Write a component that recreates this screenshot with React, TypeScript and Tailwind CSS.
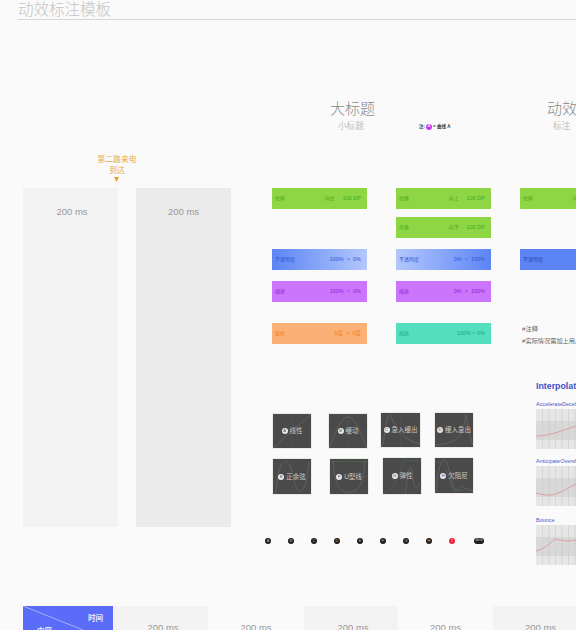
const rowTone = {
  green: "bg-[#8fd645] text-[#45a81a]",
  blueOut: "bg-gradient-to-r from-[#5c84f4] to-[#b4c7fb] text-[#2c58d6]",
  blueIn: "bg-gradient-to-r from-[#b4c7fb] to-[#5c84f4] text-[#2c58d6]",
  blue: "bg-[#5c84f4] text-[#2349b8]",
  purple: "bg-[#ca75fb] text-[#9420d8]",
  orange: "bg-[#fbb176] text-[#ef7b16]",
  teal: "bg-[#53dfbe] text-[#20a385]",
};

function MotionRow({ label, dir, value, tone, className }: { label: string; dir?: string; value?: string; tone: keyof typeof rowTone; className?: string }) {
  return (
    <div className={`flex h-[21px] w-[95px] shrink-0 items-center pl-[3px] pr-[6px] text-[5px] ${rowTone[tone]} ${className ?? ""}`}>
      <span className="whitespace-nowrap">{label}</span>
      <span className="flex-1" />
      {dir && <span className="mr-[8px] whitespace-nowrap">{dir}</span>}
      {value && <span className="whitespace-pre text-[5.5px]">{value}</span>}
    </div>
  );
}

function CurveCard({ letter, label, d, d2, className }: { letter: string; label: string; d: string; d2?: string; className?: string }) {
  return (
    <div className={`relative flex h-[34px] w-[38px] shrink-0 items-center justify-center gap-[2px] bg-[#4a4a4a] shadow-[0_0_1px_#999] ${className ?? ""}`}>
      <svg viewBox="0 0 38 34" className="absolute inset-0 h-full w-full" fill="none">
        <path d="M19 0V34M0 17H38" stroke="#555" strokeWidth="0.5" />
        <path d={d} stroke="#6e6e68" strokeWidth="0.6" />
        {d2 && <path d={d2} stroke="#4a6e4a" strokeWidth="0.6" />}
      </svg>
      <span className="relative flex h-[6px] w-[6px] items-center justify-center rounded-full bg-[#e8e8e8] text-[4px] text-[#444]">{letter}</span>
      <span className="relative whitespace-nowrap text-[6.5px] text-[#c8c8c8]">{label}</span>
    </div>
  );
}

function Dot({ letter, red }: { letter: string; red?: boolean }) {
  return (
    <span className={`flex h-[6px] w-[6px] shrink-0 items-center justify-center rounded-full text-[4px] ${red ? "bg-[#f0203c] text-white" : "bg-[#1c1c1c] text-[#bbb]"}`}>
      {letter}
    </span>
  );
}

function Chart({ name, d, className }: { name: string; d: string; className?: string }) {
  return (
    <div className={className}>
      <div className="whitespace-nowrap text-[5.5px] leading-[7px] text-[#4a5ac6]">{name}</div>
      <svg width="80" height="40" viewBox="0 0 80 40" className="mt-[1px]">
        <rect width="80" height="40" fill="#e6e6e6" />
        <rect y="12" width="80" height="19" fill="#d8d8d8" />
        {[6.5, 13, 19.5, 26, 32.5, 39, 45.5, 52, 58.5, 65, 71.5].map((x) => (
          <path key={x} d={`M${x} 0V40`} stroke="#cbcbcb" strokeWidth="0.6" />
        ))}
        <path d={d} fill="none" stroke="#d98a8c" strokeWidth="0.7" />
      </svg>
    </div>
  );
}

const timeline = [
  { fill: true, w: "w-[95px] pl-[5px]" },
  { fill: false, w: "w-[96px]" },
  { fill: true, w: "w-[94px] pl-[4px]" },
  { fill: false, w: "w-[95px]" },
  { fill: true, w: "w-[95px]" },
];

export default function App() {
  return (
    <div className="h-[630px] w-[576px] overflow-hidden bg-[#fafafa] font-['Liberation_Sans','Noto_Sans_CJK_SC',sans-serif]">
      <div className="ml-[18px] h-[20px] border-b border-[#d6d6d6] text-[15.5px] font-light leading-[19px] text-[#c4c4c4]">动效标注模板</div>

      <div className="flex h-[586px] items-start pl-[23px]">
        {/* 时间轴两列 */}
        <div className="mr-[41px] w-[208px] shrink-0 pt-[134px]">
          <div className="w-[188px] text-center text-[7.8px] leading-[11px] text-[#e8ac45]">
            第二路来电
            <br />
            到达
          </div>
          <div className="w-[186px]">
            <svg width="5" height="5" viewBox="0 0 5 5" className="mx-auto mt-[1px]">
              <path d="M0 0H5L2.5 5Z" fill="#e8a02e" />
            </svg>
          </div>
          <div className="mt-[6px] flex gap-[18px]">
            <div className="h-[339px] w-[95px] bg-[#f3f3f3] pl-[3px] pt-[17px] text-center text-[9.5px] leading-[13px] text-[#999]">200 ms</div>
            <div className="h-[339px] w-[95px] bg-[#ebebeb] pt-[17px] text-center text-[9.5px] leading-[13px] text-[#999]">200 ms</div>
          </div>
        </div>

        {/* 动效标注两列 + 曲线 */}
        <div className="w-[219px] shrink-0 pt-[80px]">
          <div className="flex gap-[29px]">
            <div className="flex w-[95px] flex-col">
              <div className="ml-[58px] whitespace-nowrap text-[15px] font-light leading-[18px] text-[#8a8a8a]">大标题</div>
              <div className="ml-[66px] mt-[3px] whitespace-nowrap text-[8.6px] leading-[10px] text-[#c0c0c0]">小标题</div>
              <MotionRow className="mt-[57px]" label="位移" dir="向左" value="100 DP" tone="green" />
              <MotionRow className="mt-[40px]" label="不透明度" value="100%  >  0%" tone="blueOut" />
              <MotionRow className="mt-[11px]" label="缩放" value="100%  >  0%" tone="purple" />
              <MotionRow className="mt-[21px]" label="旋转" value="0度  >  0度" tone="orange" />
            </div>
            <div className="flex w-[95px] flex-col">
              <div className="h-[18px]" />
              <div className="ml-[23px] mt-[4px] -mb-[1px] flex h-[10px] items-center gap-[1px] whitespace-nowrap text-[4.5px] font-bold text-[#333]">
                注:
                <span className="flex h-[6px] w-[6px] items-center justify-center rounded-full bg-[#c53af0] text-[3.5px] font-normal text-white">A</span>
                = 曲线 A
              </div>
              <MotionRow className="mt-[57px]" label="位移" dir="向上" value="100 DP" tone="green" />
              <MotionRow className="mt-[8px]" label="位移" dir="向下" value="100 DP" tone="green" />
              <MotionRow className="mt-[11px]" label="不透明度" value="0%  >  100%" tone="blueIn" />
              <MotionRow className="mt-[11px]" label="缩放" value="0%  >  100%" tone="purple" />
              <MotionRow className="mt-[21px]" label="缩放" value="100% > 0%" tone="teal" />
            </div>
          </div>

          <div className="mt-[70px] flex w-[240px] items-start pl-[1px]">
            <CurveCard letter="A" label="线性" d="M0 34L38 0" />
            <CurveCard className="ml-[18px]" letter="B" label="缓动" d="M0 34C8 16 12 3 19 3C26 3 30 16 38 34" />
            <CurveCard className="ml-[14px] -mt-[1px] w-[39px]" letter="C" label="急入缓出" d="M0 34C3 30 5 2 8 2C11 2 13 24 38 31" />
            <CurveCard className="ml-[15px] -mt-[1px]" letter="D" label="缓入急出" d="M0 32C24 30 27 24 31 2C33 12 35 28 38 32" />
          </div>
          <div className="mt-[11px] flex w-[240px] items-start pl-[1px]">
            <CurveCard className="h-[35px]" letter="E" label="正余弦" d="M3 34C5 8 9 2 12 2C18 2 20 18 22 24C24 32 28 34 30 30C34 24 35 10 36 2" />
            <CurveCard className="ml-[19px] h-[35px]" letter="F" label="U型线" d="M3 1C4 20 8 33 19 33C30 33 34 20 35 1" d2="M0 2H38" />
            <CurveCard className="ml-[15px] -mt-[1px] h-[36px]" letter="G" label="弹性" d="M22 36C25 10 27 2 29 12C31 30 33 34 36 24" d2="M0 34C16 30 18 4 22 1C28 1 30 4 38 1" />
            <CurveCard className="ml-[14px] -mt-[1px] h-[35px] w-[37px]" letter="H" label="欠阻尼" d="M1 34C3 10 6 1 9 1C13 1 15 20 20 32C24 34 26 24 28 28C30 32 32 28 38 33" d2="M1 3C8 3 12 10 17 30C24 32 30 32 38 32" />
          </div>

          <div className="-ml-[7px] mt-[44px] flex w-[240px] items-center gap-[17px]">
            {["A", "B", "C", "D", "E", "F", "G", "H"].map((l) => (
              <Dot key={l} letter={l} />
            ))}
            <Dot letter="I" red />
            <span className="ml-[2px] flex h-[6px] w-[10px] shrink-0 items-center justify-center rounded-full bg-[#1c1c1c] text-[3.5px] text-[#bbb]">曲线</span>
          </div>
        </div>

        {/* 右侧被裁切的一列 */}
        <div className="ml-[29px] w-[95px] shrink-0 pt-[80px]">
          <div className="ml-[27px] whitespace-nowrap text-[15px] font-light leading-[18px] text-[#8a8a8a]">动效标注</div>
          <div className="ml-[33px] mt-[3px] whitespace-nowrap text-[8.6px] leading-[10px] text-[#c0c0c0]">标注</div>
          <MotionRow className="mt-[57px]" label="位移" dir="向左" value="100 DP" tone="green" />
          <MotionRow className="mt-[40px]" label="不透明度" tone="blue" />
          <div className="ml-[2px] mt-[53px] whitespace-nowrap text-[6.2px] leading-[12px] text-[#666]">
            #注释
            <br />
            #实际情况需加上用户操作
          </div>
          <div className="ml-[16px] mt-[33px] whitespace-nowrap text-[8.8px] font-bold leading-[12px] text-[#3f51c8]">Interpolator</div>
          <Chart className="ml-[16px] mt-[9px]" name="AccelerateDecelerateInterpolator" d="M0 27C10 27 20 24 40 17C55 12 70 4 80 2" />
          <Chart className="ml-[16px] mt-[9px]" name="AnticipateOvershootInterpolator" d="M0 27C8 29 14 30 20 28C28 25 34 21 40 18C55 8 70 4 80 6" />
          <Chart className="ml-[16px] mt-[11px]" name="Bounce" d="M0 26C8 24 13 19 19 14C24 15 30 17 40 15C50 12 60 14 80 14" />
        </div>
      </div>

      {/* 底部时间表 */}
      <div className="flex pl-[23px]">
        <div className="relative h-[24px] w-[90px] shrink-0 overflow-hidden bg-[#5b6cf9]">
          <svg viewBox="0 0 90 24" className="absolute inset-0 h-full w-full">
            <path d="M0 0L60 24" stroke="#c6ccfc" strokeWidth="0.7" />
          </svg>
          <span className="absolute right-[10px] top-[7px] text-[7.5px] font-bold leading-[11px] text-[#e8eaff]">时间</span>
          <span className="absolute left-[14px] top-[20px] text-[7.5px] font-bold leading-[11px] text-[#e8eaff]">内容</span>
        </div>
        {timeline.map((cell, i) => (
          <div key={i} className={`h-[24px] shrink-0 pt-[15px] text-center text-[9.5px] leading-[13px] text-[#999] ${cell.w} ${cell.fill ? "bg-[#f3f3f3]" : ""}`}>
            200 ms
          </div>
        ))}
      </div>
    </div>
  );
}
